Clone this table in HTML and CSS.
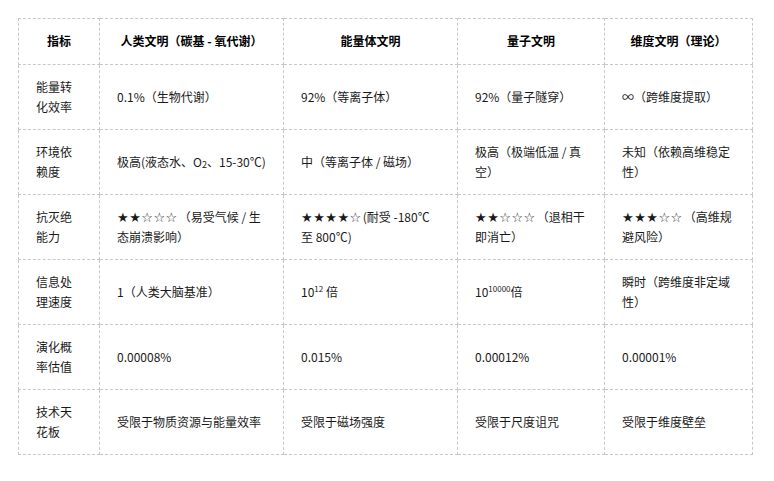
FILE: index.html
```html
<!DOCTYPE html>
<html lang="zh-CN">
<head>
<meta charset="utf-8">
<link rel="stylesheet" href="styles.css">
</head>
<body>
<table class="cmp">
  <colgroup>
    <col class="c1"><col class="c2"><col class="c3"><col class="c4"><col class="c5">
  </colgroup>
  <thead>
    <tr>
      <th>指标</th>
      <th>人类文明（碳基 - 氧代谢）</th>
      <th>能量体文明</th>
      <th>量子文明</th>
      <th>维度文明（理论）</th>
    </tr>
  </thead>
  <tbody>
    <tr>
      <td>能量转化效率</td>
      <td>0.1%（生物代谢）</td>
      <td>92%（等离子体）</td>
      <td>92%（量子隧穿）</td>
      <td>∞（跨维度提取）</td>
    </tr>
    <tr>
      <td>环境依赖度</td>
      <td>极高(液态水、O<sub>2</sub>、15-30℃)</td>
      <td>中（等离子体 / 磁场）</td>
      <td>极高（极端低温 / 真空）</td>
      <td>未知（依赖高维稳定性）</td>
    </tr>
    <tr>
      <td>抗灭绝能力</td>
      <td><span class="stars">★★☆☆☆</span>（易受气候 / 生态崩溃影响）</td>
      <td><span class="stars">★★★★☆</span>(耐受 -180℃ 至 800℃)</td>
      <td><span class="stars">★★☆☆☆</span>（退相干即消亡）</td>
      <td><span class="stars">★★★☆☆</span>（高维规避风险）</td>
    </tr>
    <tr>
      <td>信息处理速度</td>
      <td>1（人类大脑基准）</td>
      <td>10<sup>12</sup> 倍</td>
      <td>10<sup>10000</sup>倍</td>
      <td>瞬时（跨维度非定域性）</td>
    </tr>
    <tr>
      <td>演化概率估值</td>
      <td>0.00008%</td>
      <td>0.015%</td>
      <td>0.00012%</td>
      <td>0.00001%</td>
    </tr>
    <tr>
      <td>技术天花板</td>
      <td>受限于物质资源与能量效率</td>
      <td>受限于磁场强度</td>
      <td>受限于尺度诅咒</td>
      <td>受限于维度壁垒</td>
    </tr>
  </tbody>
</table>
</body>
</html>
```
FILE: styles.css
```css
html, body {
  margin: 0;
  background: #fff;
}
body {
  padding: 18px;
  font-family: "Noto Sans CJK SC", "Liberation Sans", sans-serif;
  font-size: 12px;
  line-height: 20px;
  color: #1a1a1a;
}
.cmp {
  border-collapse: collapse;
  table-layout: fixed;
  width: 735px;
}
.c1 { width: 81px; }
.c2 { width: 184px; }
.c3 { width: 174px; }
.c4 { width: 147px; }
.c5 { width: 148px; }
.cmp th, .cmp td {
  border: 1px dashed #c8c8c8;
  padding: 12px 17px;
  vertical-align: middle;
}
.cmp th {
  padding-bottom: 13px;
  font-weight: bold;
  text-align: center;
  color: #000;
}
.cmp td {
  text-align: left;
}
.stars {
  font-family: "DejaVu Sans", sans-serif;
  font-size: 13px;
  line-height: 1;
  letter-spacing: 0.5px;
  margin-right: 1px;
}
.cmp sup {
  font-size: 8px;
  line-height: 0;
  vertical-align: 5px;
}
.cmp sub {
  font-size: 9px;
  line-height: 0;
  vertical-align: -1px;
}
```
